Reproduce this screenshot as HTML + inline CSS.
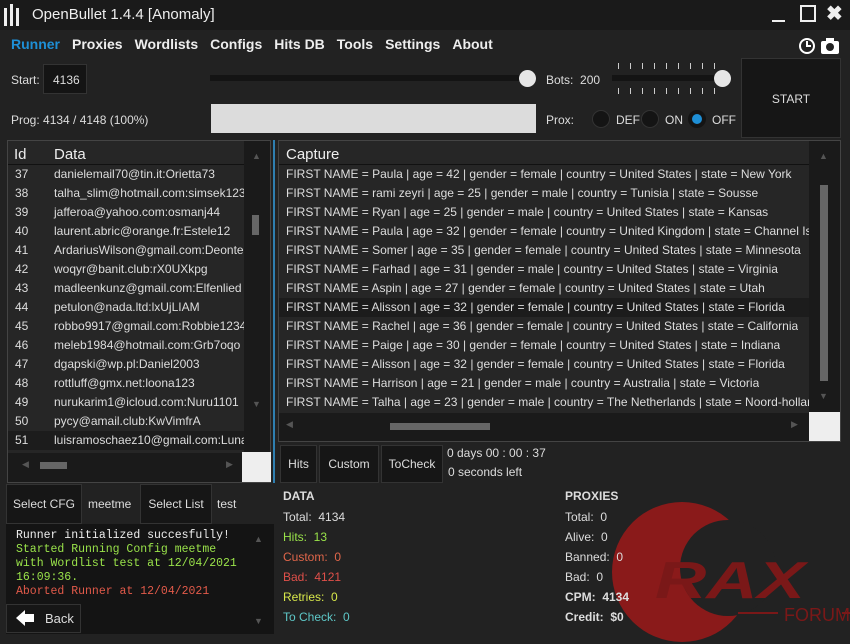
<!DOCTYPE html>
<html><head><meta charset="utf-8"><style>
*{margin:0;padding:0;box-sizing:border-box}
body{width:850px;height:644px;background:#222;font-family:"Liberation Sans",sans-serif;color:#ddd;position:relative;overflow:hidden;font-size:12px}
.a{position:absolute;white-space:nowrap}
.nav span{margin-right:12px;font-weight:bold;font-size:14px;color:#eee}
.row{position:absolute;left:0;height:19px;line-height:19px;font-size:12px;color:#ddd;white-space:nowrap;overflow:hidden}
.btn{position:absolute;background:#161616;border:1px solid #333;color:#ddd;font-size:12px;text-align:center}
.rad{position:absolute;width:18px;height:18px;border-radius:50%;background:#141414;border:1px solid #333}
.mono{font-family:"Liberation Mono",monospace;font-size:11.5px;line-height:14px}
</style></head><body>
<div class="a" style="left:0;top:0;width:850px;height:30px;background:#1a1a1a"></div>
<svg class="a" style="left:3px;top:4px" width="18" height="22"><g fill="#eee"><rect x="1" y="4" width="3" height="18"/><rect x="7" y="0" width="3" height="22"/><rect x="13" y="4" width="3" height="18"/></g></svg>
<div class="a" style="left:32px;top:6px;font-size:15px;color:#eee">OpenBullet 1.4.4 [Anomaly]</div>
<div class="a" style="left:772px;top:20px;width:13px;height:2px;background:#eee"></div>
<div class="a" style="left:800px;top:5px;width:16px;height:17px;border:2px solid #eee"></div>
<div class="a" style="left:826px;top:1px;font-size:20px;color:#eee;font-weight:bold">✖</div>
<div class="a nav" style="left:11px;top:36px"><span style="color:#1e8fd6">Runner</span><span>Proxies</span><span>Wordlists</span><span>Configs</span><span>Hits DB</span><span>Tools</span><span>Settings</span><span>About</span></div>
<svg class="a" style="left:797px;top:36px" width="46" height="20"><circle cx="10" cy="10" r="7" fill="none" stroke="#fff" stroke-width="2"/><path d="M10 5v5h4" stroke="#fff" stroke-width="2" fill="none"/><rect x="24" y="5" width="18" height="13" rx="2" fill="#fff"/><rect x="29" y="2" width="8" height="4" fill="#fff"/><circle cx="33" cy="11" r="4" fill="#222"/></svg>
<div class="a" style="left:11px;top:73px">Start:</div>
<div class="a" style="left:43px;top:64px;width:44px;height:30px;background:#141414;border:1px solid #333;padding:8px 0 0 9px">4136</div>
<div class="a" style="left:210px;top:75px;width:318px;height:6px;background:#141414"></div>
<div class="a" style="left:519px;top:70px;width:17px;height:17px;border-radius:50%;background:#e6e6e6"></div>
<div class="a" style="left:546px;top:73px">Bots:&nbsp; 200</div>
<div class="a" style="left:612px;top:75px;width:110px;height:6px;background:#141414"></div>
<div class="a" style="left:714px;top:70px;width:17px;height:17px;border-radius:50%;background:#e6e6e6"></div>
<div class="a" style="left:618px;top:63px;width:100px;height:6px;background:repeating-linear-gradient(90deg,#ccc 0 1px,transparent 1px 12px)"></div>
<div class="a" style="left:618px;top:88px;width:100px;height:6px;background:repeating-linear-gradient(90deg,#ccc 0 1px,transparent 1px 12px)"></div>
<div class="a" style="left:741px;top:58px;width:100px;height:80px;background:#161616;border:1px solid #333;text-align:center;line-height:80px">START</div>
<div class="a" style="left:11px;top:113px">Prog: 4134 / 4148 (100%)</div>
<div class="a" style="left:211px;top:104px;width:325px;height:29px;background:#dcdcdc"></div>
<div class="a" style="left:546px;top:113px">Prox:</div>
<div class="rad" style="left:592px;top:110px"></div><div class="a" style="left:616px;top:113px">DEF</div>
<div class="rad" style="left:641px;top:110px"></div><div class="a" style="left:665px;top:113px">ON</div>
<div class="rad" style="left:688px;top:110px;border:4px solid #141414;background:#1e8fd6"></div><div class="a" style="left:712px;top:113px">OFF</div>

<!-- left list -->
<div class="a" style="left:7px;top:140px;width:264px;height:343px;background:#1a1a1a;border:1px solid #444">
 <div class="a" style="left:0;top:0;width:236px;height:312px;background:#262626"></div>
 <div class="a" style="left:6px;top:5px;font-size:15px;color:#eee">Id</div>
 <div class="a" style="left:46px;top:5px;font-size:15px;color:#eee">Data</div>
 <div class="a" style="left:0;top:23px;width:236px;height:1px;background:#111"></div>
 <div class="a" style="left:0;top:24px;width:236px;height:289px;">
 <div class="row" style="top:0;width:236px"><span style="display:inline-block;width:46px;padding-left:7px">37</span>danielemail70@tin.it:Orietta73</div>
 <div class="row" style="top:19px;width:236px"><span style="display:inline-block;width:46px;padding-left:7px">38</span>talha_slim@hotmail.com:simsek123</div>
 <div class="row" style="top:38px;width:236px"><span style="display:inline-block;width:46px;padding-left:7px">39</span>jafferoa@yahoo.com:osmanj44</div>
 <div class="row" style="top:57px;width:236px"><span style="display:inline-block;width:46px;padding-left:7px">40</span>laurent.abric@orange.fr:Estele12</div>
 <div class="row" style="top:76px;width:236px"><span style="display:inline-block;width:46px;padding-left:7px">41</span>ArdariusWilson@gmail.com:Deonte</div>
 <div class="row" style="top:95px;width:236px"><span style="display:inline-block;width:46px;padding-left:7px">42</span>woqyr@banit.club:rX0UXkpg</div>
 <div class="row" style="top:114px;width:236px"><span style="display:inline-block;width:46px;padding-left:7px">43</span>madleenkunz@gmail.com:Elfenlied</div>
 <div class="row" style="top:133px;width:236px"><span style="display:inline-block;width:46px;padding-left:7px">44</span>petulon@nada.ltd:lxUjLIAM</div>
 <div class="row" style="top:152px;width:236px"><span style="display:inline-block;width:46px;padding-left:7px">45</span>robbo9917@gmail.com:Robbie1234</div>
 <div class="row" style="top:171px;width:236px"><span style="display:inline-block;width:46px;padding-left:7px">46</span>meleb1984@hotmail.com:Grb7oqo</div>
 <div class="row" style="top:190px;width:236px"><span style="display:inline-block;width:46px;padding-left:7px">47</span>dgapski@wp.pl:Daniel2003</div>
 <div class="row" style="top:209px;width:236px"><span style="display:inline-block;width:46px;padding-left:7px">48</span>rottluff@gmx.net:loona123</div>
 <div class="row" style="top:228px;width:236px"><span style="display:inline-block;width:46px;padding-left:7px">49</span>nurukarim1@icloud.com:Nuru1101</div>
 <div class="row" style="top:247px;width:236px"><span style="display:inline-block;width:46px;padding-left:7px">50</span>pycy@amail.club:KwVimfrA</div>
 <div class="row" style="top:266px;width:236px;background:#1c1c1c"><span style="display:inline-block;width:46px;padding-left:7px">51</span>luisramoschaez10@gmail.com:Luna</div>
 </div>
 <div class="a" style="left:244px;top:10px;color:#555;font-size:9px">▲</div>
 <div class="a" style="left:244px;top:74px;width:7px;height:20px;background:#666"></div>
 <div class="a" style="left:244px;top:258px;color:#555;font-size:9px">▼</div>
 <div class="a" style="left:14px;top:318px;color:#555;font-size:9px">◀</div>
 <div class="a" style="left:32px;top:321px;width:27px;height:7px;background:#666"></div>
 <div class="a" style="left:218px;top:318px;color:#555;font-size:9px">▶</div>
 <div class="a" style="left:234px;top:311px;width:29px;height:30px;background:#eee"></div>
</div>
<div class="a" style="left:273px;top:140px;width:2px;height:343px;background:#2f7fb0"></div>

<!-- right list -->
<div class="a" style="left:278px;top:140px;width:563px;height:302px;background:#1a1a1a;border:1px solid #444">
 <div class="a" style="left:0;top:0;width:530px;height:272px;background:#262626"></div>
 <div class="a" style="left:7px;top:5px;font-size:15px;color:#eee">Capture</div>
 <div class="a" style="left:0;top:23px;width:530px;height:1px;background:#111"></div>
 <div class="a" style="left:0;top:24px;width:530px;height:248px;overflow:hidden">
 <div class="row" style="top:0;padding-left:7px">FIRST NAME = Paula | age = 42 | gender = female | country = United States | state = New York</div>
 <div class="row" style="top:19px;padding-left:7px">FIRST NAME = rami zeyri | age = 25 | gender = male | country = Tunisia | state = Sousse</div>
 <div class="row" style="top:38px;padding-left:7px">FIRST NAME = Ryan | age = 25 | gender = male | country = United States | state = Kansas</div>
 <div class="row" style="top:57px;padding-left:7px">FIRST NAME = Paula | age = 32 | gender = female | country = United Kingdom | state = Channel Islands</div>
 <div class="row" style="top:76px;padding-left:7px">FIRST NAME = Somer | age = 35 | gender = female | country = United States | state = Minnesota</div>
 <div class="row" style="top:95px;padding-left:7px">FIRST NAME = Farhad | age = 31 | gender = male | country = United States | state = Virginia</div>
 <div class="row" style="top:114px;padding-left:7px">FIRST NAME = Aspin | age = 27 | gender = female | country = United States | state = Utah</div>
 <div class="row" style="top:133px;padding-left:7px;width:530px;background:#1c1c1c">FIRST NAME = Alisson | age = 32 | gender = female | country = United States | state = Florida</div>
 <div class="row" style="top:152px;padding-left:7px">FIRST NAME = Rachel | age = 36 | gender = female | country = United States | state = California</div>
 <div class="row" style="top:171px;padding-left:7px">FIRST NAME = Paige | age = 30 | gender = female | country = United States | state = Indiana</div>
 <div class="row" style="top:190px;padding-left:7px">FIRST NAME = Alisson | age = 32 | gender = female | country = United States | state = Florida</div>
 <div class="row" style="top:209px;padding-left:7px">FIRST NAME = Harrison | age = 21 | gender = male | country = Australia | state = Victoria</div>
 <div class="row" style="top:228px;padding-left:7px">FIRST NAME = Talha | age = 23 | gender = male | country = The Netherlands | state = Noord-holland</div>
 </div>
 <div class="a" style="left:540px;top:10px;color:#555;font-size:9px">▲</div>
 <div class="a" style="left:541px;top:44px;width:8px;height:196px;background:#666"></div>
 <div class="a" style="left:540px;top:250px;color:#555;font-size:9px">▼</div>
 <div class="a" style="left:7px;top:278px;color:#555;font-size:9px">◀</div>
 <div class="a" style="left:111px;top:282px;width:100px;height:7px;background:#666"></div>
 <div class="a" style="left:512px;top:278px;color:#555;font-size:9px">▶</div>
 <div class="a" style="left:530px;top:271px;width:31px;height:29px;background:#eee"></div>
</div>

<div class="btn" style="left:280px;top:445px;width:37px;height:38px;line-height:36px">Hits</div>
<div class="btn" style="left:319px;top:445px;width:60px;height:38px;line-height:36px">Custom</div>
<div class="btn" style="left:381px;top:445px;width:62px;height:38px;line-height:36px">ToCheck</div>
<div class="a" style="left:447px;top:446px">0 days 00 : 00 : 37</div>
<div class="a" style="left:448px;top:465px">0 seconds left</div>

<div class="btn" style="left:6px;top:484px;width:76px;height:40px;line-height:38px">Select CFG</div>
<div class="a" style="left:88px;top:497px">meetme</div>
<div class="btn" style="left:140px;top:484px;width:72px;height:40px;line-height:38px">Select List</div>
<div class="a" style="left:217px;top:497px">test</div>
<div class="a" style="left:6px;top:524px;width:268px;height:110px;background:#141414"></div>
<div class="a mono" style="left:16px;top:529px;color:#eee">Runner initialized succesfully!</div>
<div class="a mono" style="left:16px;top:543px;color:#9ae34a">Started Running Config meetme<br>with Wordlist test at 12/04/2021<br>16:09:36.</div>
<div class="a mono" style="left:16px;top:585px;color:#e25a4a">Aborted Runner at 12/04/2021</div>
<div class="a" style="left:254px;top:534px;color:#555;font-size:9px">▲</div>
<div class="a" style="left:254px;top:616px;color:#555;font-size:9px">▼</div>
<div class="btn" style="left:6px;top:604px;width:75px;height:29px;line-height:27px;text-align:left;padding-left:38px;font-size:13px">Back</div>
<svg class="a" style="left:14px;top:608px" width="22" height="20"><path d="M2 10 L11 2 V6 H20 V14 H11 V18 Z" fill="#fff"/></svg>

<!-- watermark -->
<svg class="a" style="left:600px;top:500px" width="250" height="144">
 <circle cx="82" cy="72" r="70" fill="#8a1a1a"/>
 <circle cx="128" cy="68" r="48" fill="#222"/>
 <text x="55" y="98" font-family="Liberation Sans" font-weight="bold" font-style="italic" font-size="52" fill="#7a1818" textLength="150" lengthAdjust="spacingAndGlyphs">RAX</text>
 <rect x="138" y="112" width="40" height="2" fill="#7a1818"/>
 <text x="146" y="121" font-family="Liberation Sans" font-size="18" fill="#7a1818" transform="translate(38,0)">FORUM</text>
 <rect x="242" y="112" width="10" height="2" fill="#7a1818"/>
</svg>

<div class="a" style="left:283px;top:489px;font-weight:bold">DATA</div>
<div class="a" style="left:283px;top:510px">Total:&nbsp; 4134</div>
<div class="a" style="left:283px;top:530px;color:#9ae34a">Hits:&nbsp; 13</div>
<div class="a" style="left:283px;top:550px;color:#e0664a">Custom:&nbsp; 0</div>
<div class="a" style="left:283px;top:570px;color:#e0504a">Bad:&nbsp; 4121</div>
<div class="a" style="left:283px;top:590px;color:#d8e84a">Retries:&nbsp; 0</div>
<div class="a" style="left:283px;top:610px;color:#5ec8c8">To Check:&nbsp; 0</div>
<div class="a" style="left:565px;top:489px;font-weight:bold">PROXIES</div>
<div class="a" style="left:565px;top:510px">Total:&nbsp; 0</div>
<div class="a" style="left:565px;top:530px">Alive:&nbsp; 0</div>
<div class="a" style="left:565px;top:550px">Banned:&nbsp; 0</div>
<div class="a" style="left:565px;top:570px">Bad:&nbsp; 0</div>
<div class="a" style="left:565px;top:590px;font-weight:bold">CPM:&nbsp; 4134</div>
<div class="a" style="left:565px;top:610px;font-weight:bold">Credit:&nbsp; $0</div>
</body></html>
